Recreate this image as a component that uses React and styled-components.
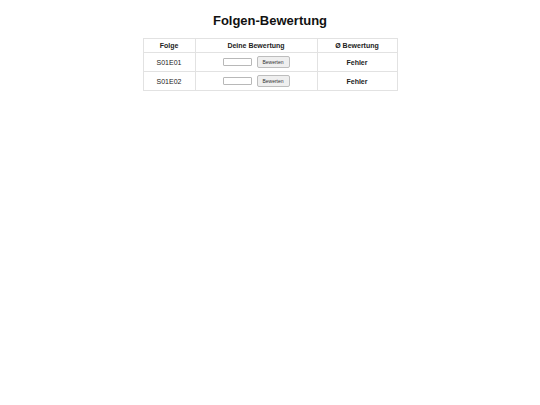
import styled, { createGlobalStyle } from "styled-components";

const GlobalStyle = createGlobalStyle`
  html, body {
    margin: 0;
    padding: 0;
    background: #ffffff;
    font-family: "Liberation Sans", Arial, sans-serif;
    color: #222;
  }
`;

const Page = styled.div`
  display: flex;
  flex-direction: column;
  align-items: center;
  padding-top: 13px;
`;

const Title = styled.h1`
  margin: 0 0 10px 0;
  font-size: 13px;
  line-height: 15px;
  font-weight: bold;
  color: #111;
`;

const Table = styled.table`
  border-collapse: collapse;
  width: 251px;
  font-size: 7px;
  table-layout: fixed;
`;

const HeadCell = styled.th`
  border: 1px solid #e2e2e2;
  height: 13px;
  padding: 0;
  font-weight: bold;
  text-align: center;
  width: ${(p) => p.$w}px;
`;

const Cell = styled.td`
  border: 1px solid #e2e2e2;
  height: 18px;
  padding: 0;
  text-align: center;
  font-weight: ${(p) => (p.$bold ? "bold" : "normal")};
`;

const RateBox = styled.div`
  display: flex;
  justify-content: center;
  align-items: center;
  gap: 5px;
`;

const Input = styled.input`
  width: 29px;
  height: 8px;
  box-sizing: border-box;
  border: 1px solid #b8b8b8;
  border-radius: 1px;
  padding: 0;
  margin: 0;
  background: #fff;
`;

const RateButton = styled.button`
  width: 33px;
  height: 12px;
  box-sizing: border-box;
  padding: 0;
  margin: 0;
  border: 1px solid #bdbdbd;
  border-radius: 2px;
  background: #efefef;
  font-family: "Liberation Sans", Arial, sans-serif;
  font-size: 5px;
  color: #333;
`;

const episodes = ["S01E01", "S01E02"];

export default function App() {
  return (
    <>
      <GlobalStyle />
      <Page>
        <Title>Folgen-Bewertung</Title>
        <Table>
          <thead>
            <tr>
              <HeadCell $w={51}>Folge</HeadCell>
              <HeadCell $w={121}>Deine Bewertung</HeadCell>
              <HeadCell $w={79}>Ø Bewertung</HeadCell>
            </tr>
          </thead>
          <tbody>
            {episodes.map((ep) => (
              <tr key={ep}>
                <Cell>{ep}</Cell>
                <Cell>
                  <RateBox>
                    <Input type="text" />
                    <RateButton>Bewerten</RateButton>
                  </RateBox>
                </Cell>
                <Cell $bold>Fehler</Cell>
              </tr>
            ))}
          </tbody>
        </Table>
      </Page>
    </>
  );
}
